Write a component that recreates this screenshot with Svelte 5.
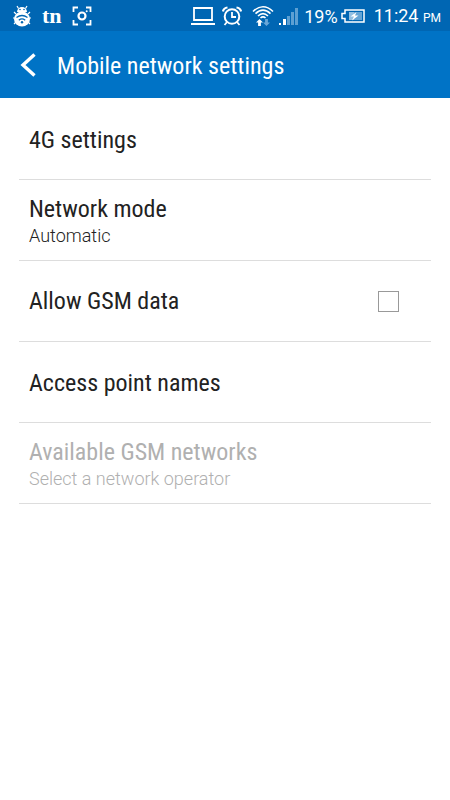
<script lang="ts">
  interface Setting {
    title: string;
    summary?: string;
    disabled?: boolean;
  }

  const before: Setting[] = [
    { title: '4G settings' },
    { title: 'Network mode', summary: 'Automatic' },
  ];

  const after: Setting[] = [
    { title: 'Access point names' },
    { title: 'Available GSM networks', summary: 'Select a network operator', disabled: true },
  ];

  let allowGsm = $state(false);
</script>

{#snippet row(item: Setting)}
  <li>
    <button class="row" disabled={item.disabled}>
      <span class="title">{item.title}</span>
      {#if item.summary}
        <span class="summary">{item.summary}</span>
      {/if}
    </button>
  </li>
{/snippet}

<div class="screen">
  <div class="status">
    <div class="group">
      <!-- wifi bug -->
      <svg width="20" height="22" viewBox="0 0 20 22">
        <g stroke="#fff" stroke-width="1.2" fill="none">
          <path d="M6.500 3.500 5 1M13.500 3.500 15 1M4 9 2 7M16 9l2-2M3 13H1M17 13h2M4 17l-2 2M16 17l2 2" />
        </g>
        <path d="M5 7a5 5 0 0 1 10 0z" fill="#fff" />
        <ellipse cx="10" cy="14" rx="8" ry="7.500" fill="#fff" />
        <circle cx="8" cy="4.500" r=".8" fill="#0066b3" />
        <circle cx="12" cy="4.500" r=".8" fill="#0066b3" />
        <path d="M4.500 12.500q5.500-4 11 0M6.800 15.200q3.200-2.500 6.400 0" stroke="#0066b3" stroke-width="1.300" fill="none" />
        <circle cx="10" cy="17.200" r="1.200" fill="#0066b3" />
      </svg>
      <span class="tn">tn</span>
      <!-- screen capture -->
      <svg width="20" height="20" viewBox="0 0 20 20" fill="none" stroke="#fff">
        <path d="M1.500 6V1.500H6M14 1.500h4.500V6M18.500 14v4.500H14M6 18.500H1.500V14" stroke-width="1.800" />
        <circle cx="10" cy="10" r="3.500" stroke-width="2.200" />
        <circle cx="14.700" cy="5.300" r="1" fill="#fff" stroke="none" />
      </svg>
    </div>

    <div class="group right">
      <div class="group alerts">
        <!-- laptop -->
        <svg width="24" height="20" viewBox="0 0 24 20" fill="none" stroke="#fff">
          <path d="M3 2h18v12H3z" stroke-width="1.800" />
          <path d="M0 18h24" stroke-width="2" />
        </svg>
        <!-- alarm -->
        <svg width="20" height="20" viewBox="0 0 20 20" fill="none" stroke="#fff">
          <circle cx="10" cy="10.500" r="7.300" stroke-width="2" />
          <path d="M1 5.500Q1.500 2 5.500 1.500M14.500 1.500Q18.500 2 19 5.500" stroke-width="2.200" />
          <path d="M10 6v5h4M5 16l-2.500 3M15 16l2.500 3" stroke-width="1.800" />
        </svg>
      </div>
      <!-- wifi -->
      <svg width="22" height="22" viewBox="0 0 22 22" fill="none" stroke="#fff">
        <path d="M1 6.500Q11-3 21 6.500M3.500 8.700q7.500-7 15 0M6 11q5-4.600 10 0M8.500 13q2.500-2.200 5 0" stroke-width="1.600" />
        <path d="m7.500 14 3.500 3.500H8.900V21H6.100v-3.500H4z" fill="#fff" stroke="none" />
        <path d="m14.500 21 3.500-3.500h-2.100V14h-2.800v3.500H11z" fill="#69a7d8" stroke="none" />
      </svg>
      <!-- signal -->
      <svg width="20" height="18" viewBox="0 0 20 18">
        <path d="M0 16h2v2H0zM4 12h3v6H4z" fill="#fff" />
        <path d="M8 9h3v9H8zM12 5h3v13h-3zM16 1h3v17h-3z" fill="#5c9fd2" />
      </svg>
      <span class="percent">19%</span>
      <!-- battery -->
      <svg width="24" height="14" viewBox="0 0 24 14">
        <path d="M4 1h19v12H4V9.500H1v-5h3z" fill="none" stroke="#fff" stroke-width="1.500" />
        <path d="M8 3h13v8H8z" fill="#65a4d5" />
        <path d="M8 3h5v8H8z" fill="#fff" opacity=".3" />
        <path d="m15.500 3-6 4.500h3.500L11 11.500l6.500-5H14z" fill="#fff" />
      </svg>
      <span class="time">11:24 <small>PM</small></span>
    </div>
  </div>

  <header>
    <button class="back" aria-label="Back">
      <svg width="16" height="24" viewBox="0 0 16 24">
        <path d="M14.500 1.500 3 12l11.500 10.500" fill="none" stroke="#fff" stroke-width="3.400" />
      </svg>
    </button>
    <h1>Mobile network settings</h1>
  </header>

  <ul>
    {#each before as item}
      {@render row(item)}
    {/each}
    <li>
      <label class="row check">
        <span class="title">Allow GSM data</span>
        <input type="checkbox" bind:checked={allowGsm} />
      </label>
    </li>
    {#each after as item}
      {@render row(item)}
    {/each}
  </ul>
</div>

<style>
  :global(body) {
    margin: 0;
    background: #fff;
  }

  .screen {
    font-family: 'Roboto Condensed', Roboto, sans-serif;
    color: #222;
  }

  .status {
    display: flex;
    align-items: center;
    justify-content: space-between;
    box-sizing: border-box;
    height: 31px;
    padding: 1px 9px 0 12px;
    background: #0066b3;
    color: #fff;
    font-family: Roboto, sans-serif;
  }

  .group {
    display: flex;
    align-items: center;
    gap: 10px;
  }

  .right {
    gap: 5px;
  }

  .alerts {
    gap: 7px;
    padding-right: 5px;
  }

  .group svg {
    display: block;
  }

  .tn {
    font: bold 22px/24px 'Liberation Serif', serif;
  }

  .percent,
  .time {
    padding-top: 2px;
    font-size: 18px;
    line-height: 24px;
    white-space: nowrap;
  }

  .percent {
    margin-right: -2px;
  }

  .time {
    padding-left: 4px;
  }

  .time small {
    font-size: 12px;
  }

  header {
    display: flex;
    align-items: center;
    height: 67px;
    padding: 0 20px;
    gap: 21px;
    background: #0073c6;
    color: #fff;
  }

  h1 {
    margin: 0;
    padding-top: 3px;
    font-size: 24px;
    line-height: 32px;
    font-weight: 400;
  }

  .back {
    display: flex;
    padding: 0;
    border: 0;
    background: none;
    cursor: pointer;
  }

  ul {
    margin: 0;
    padding: 1px 19px 0;
    list-style: none;
  }

  li {
    border-bottom: 1px solid #ddd;
  }

  .row {
    display: flex;
    flex-direction: column;
    justify-content: center;
    box-sizing: border-box;
    width: 100%;
    min-height: 80px;
    padding: 1px 10px 0;
    border: 0;
    background: none;
    color: inherit;
    font: inherit;
    text-align: left;
    cursor: pointer;
  }

  .row:disabled {
    color: #b0b0b0;
    cursor: default;
  }

  .check {
    flex-direction: row;
    align-items: center;
    justify-content: space-between;
    padding: 0 32px 0 10px;
  }

  .title {
    font-size: 24px;
    font-weight: 380;
    line-height: 30px;
  }

  .summary {
    font-family: Roboto, sans-serif;
    font-weight: 280;
    font-size: 18px;
    line-height: 24px;
  }

  input {
    appearance: none;
    width: 21px;
    height: 21px;
    margin: 0;
    border: 1px solid #999;
    background: #fff;
  }

  input:checked {
    background: #0073c6;
  }
</style>
